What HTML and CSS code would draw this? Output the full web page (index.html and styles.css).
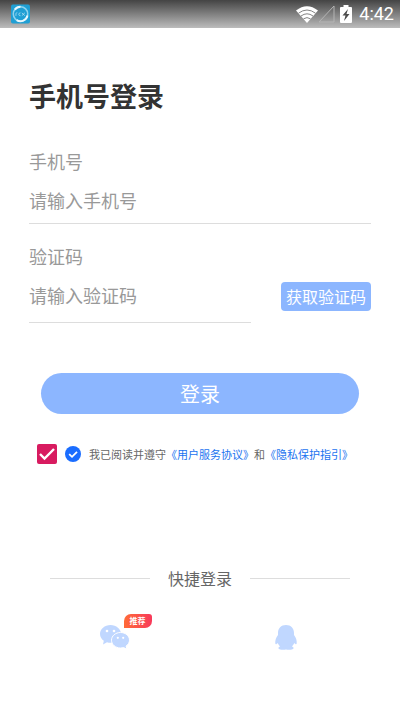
FILE: index.html
```html
<!DOCTYPE html>
<html lang="zh-CN">
<head>
<meta charset="utf-8">
<meta name="viewport" content="width=device-width, initial-scale=1">
<title>手机号登录</title>
<link rel="stylesheet" href="styles.css">
</head>
<body>
<header class="status">
  <svg class="status-app" viewBox="0 0 20 20" aria-hidden="true">
    <rect width="20" height="20" rx="2" fill="#1f9fd4"/>
    <circle cx="10" cy="10" r="7.6" fill="none" stroke="#8fd3ee" stroke-width="1.6"/>
    <path d="M4 5.4A7.6 7.6 0 0 1 10 2.4M17.4 11.6A7.6 7.6 0 0 1 6 16.4" fill="none" stroke="#e8f7fd" stroke-width="2"/>
    <path d="M5.2 12V9.6q.2-1 1.4-1M10 8.8q-1.800 0-1.800 1.500t1.800 1.500M11.400 8.800l3.200 3M14.600 8.800l-3.200 3" fill="none" stroke="#b5e2f4" stroke-width=".8"/>
  </svg>
  <div class="status-icons">
    <svg class="wifi" viewBox="0 0 22 17" aria-hidden="true">
      <path d="M0 4.500Q11-4 22 4.500L11 17z" fill="#fff"/>
      <path d="M2.500 7.200Q11 .8 19.500 7.200M5 10Q11 5.600 17 10M7.500 12.800Q11 10.400 14.500 12.800" fill="none" stroke="#858585" stroke-width="1"/>
    </svg>
    <svg class="signal" viewBox="0 0 17 18" aria-hidden="true">
      <path d="M16 1v16H1z" fill="none" stroke="#b4b4b4" stroke-width="1"/>
    </svg>
    <svg class="battery" viewBox="0 0 12 18" aria-hidden="true">
      <path d="M3.500 0h5v2H11q1 0 1 1v14q0 1-1 1H1q-1 0-1-1V3q0-1 1-1h2.500z" fill="#fff"/>
      <path d="M8 4L2.500 10.500h3L4 16l5.500-7h-3z" fill="#4c4c4c"/>
    </svg>
    <time class="clock">4:42</time>
  </div>
</header>
<main class="page">
  <h1 class="title">手机号登录</h1>
  <form class="form">
    <div class="field">
      <label class="label" for="phone">手机号</label>
      <input class="input" id="phone" type="tel" placeholder="请输入手机号">
    </div>
    <div class="code-row">
      <div class="field code-field">
        <label class="label" for="code">验证码</label>
        <input class="input" id="code" type="text" inputmode="numeric" placeholder="请输入验证码">
      </div>
      <button class="code-button" type="button">获取验证码</button>
    </div>
    <button class="login" type="submit">登录</button>
    <div class="agreement">
      <span class="tick tick-square">
        <input type="checkbox" aria-label="同意协议" checked>
        <svg viewBox="0 0 20 20" aria-hidden="true"><path d="M3 10l4.500 4.500L17 5" fill="none" stroke="#fff" stroke-width="2.400"/></svg>
      </span>
      <span class="tick tick-round">
        <input type="checkbox" id="agree" checked>
        <svg viewBox="0 0 16 16" aria-hidden="true"><path d="M4.200 8.200l2.800 2.600 5-5" fill="none" stroke="#fff" stroke-width="1.800"/></svg>
      </span>
      <div class="agreement-text"><label for="agree">我已阅读并遵守</label><a href="#terms">《用户服务协议》</a>和<a href="#privacy">《隐私保护指引》</a></div>
    </div>
  </form>
  <section class="quick">
    <h2 class="quick-title">快捷登录</h2>
    <div class="quick-options">
      <a class="option" href="#wechat" aria-label="微信">
        <svg class="wechat" viewBox="0 0 30 24" aria-hidden="true">
          <path d="M10.500 0C4.700 0 0 4 0 9c0 2.800 1.500 5.200 3.800 6.800L3 19.500l4-2.200q1.700.5 3.500.5C16.300 17.800 21 14 21 9S16.300 0 10.500 0z" fill="#c0d7ff"/>
          <path d="M20.500 7.500c-5 0-9 3.400-9 7.700s4 7.800 9 7.800q1.600 0 3-.4l3.400 1.400-.8-3c2-1.400 3.400-3.400 3.400-5.800 0-4.300-4-7.700-9-7.700z" fill="#c0d7ff" stroke="#fff" stroke-width="1"/>
          <g fill="#fff"><circle cx="7" cy="6" r="1.300"/><circle cx="14" cy="6" r="1.300"/><circle cx="17.800" cy="12.800" r="1.100"/><circle cx="23.200" cy="12.800" r="1.100"/></g>
        </svg>
        <span class="badge">推荐</span>
      </a>
      <a class="option" href="#qq" aria-label="QQ">
        <svg class="qq" viewBox="0 0 22 25" aria-hidden="true">
          <path d="M11 0C6 0 3 3.500 3 8v2C1 12.500 0 15.500.3 18.500c.3 1.500 1.500.5 2.500-.5.4 1.300 1.200 2.500 2.400 3.300-1.300.5-2 1.200-1.700 2.200.5 1.500 5.500 1.500 7.500 1 2 .5 7 .5 7.500-1 .3-1-.4-1.700-1.700-2.200 1.200-.8 2-2 2.400-3.300 1 1 2.200 2 2.500.5.300-3-.7-6-2.700-8.500V8C19 3.500 16 0 11 0z" fill="#c0d7ff"/>
        </svg>
      </a>
    </div>
  </section>
</main>
</body>
</html>
```
FILE: styles.css
```css
* {
  box-sizing: border-box;
}

body {
  margin: 0;
  background: #fff;
  color: #666;
  font-family: "Noto Sans CJK SC", sans-serif;
}

button,
input {
  margin: 0;
  padding: 0;
  border: 0;
  font: inherit;
}

a {
  color: #1a73f0;
  text-decoration: none;
}

svg {
  display: block;
}

.status {
  display: flex;
  justify-content: space-between;
  align-items: center;
  height: 28px;
  padding: 0 6px 0 11px;
  background: linear-gradient(#444, #bcbcbc);
}

.status-app {
  width: 19px;
  height: 20px;
}

.status-icons {
  display: flex;
  align-items: center;
}

.wifi {
  width: 22px;
  height: 17px;
}

.signal {
  width: 17px;
  height: 18px;
}

.battery {
  width: 12px;
  height: 18px;
  margin: 0 7px 0 5px;
}

.clock {
  color: #fff;
  font: 18px/28px Roboto, sans-serif;
}

.page {
  padding: 48px 29px 0;
}

.title {
  margin: 0 0 31px;
  color: #333;
  font-size: 27px;
  line-height: 40px;
  font-weight: 700;
}

.field {
  display: flex;
  flex-direction: column;
  gap: 11px;
  padding-bottom: 9px;
  border-bottom: 1px solid #ddd;
}

.label,
.input {
  height: 28px;
  color: #999;
  font-size: 18px;
  line-height: 28px;
}

.input {
  width: 100%;
  background: none;
  outline: 0;
}

.input::placeholder {
  color: #999;
  opacity: 1;
}

.code-row {
  display: flex;
  align-items: flex-end;
  gap: 30px;
  margin-top: 18px;
}

.code-field {
  flex: 1;
  min-width: 0;
  padding-bottom: 13px;
}

.code-button {
  width: 90px;
  height: 29px;
  margin-bottom: 12px;
  border-radius: 4px;
  background: #8cb6ff;
  color: #fff;
  font-size: 16px;
  line-height: 29px;
  white-space: nowrap;
}

.login {
  display: block;
  width: calc(100% - 24px);
  height: 41px;
  margin: 50px auto 0;
  border-radius: 21px;
  background: #8cb6ff;
  color: #fff;
  font-size: 20px;
  line-height: 41px;
}

.agreement {
  display: flex;
  align-items: center;
  gap: 8px;
  margin: 30px 0 0 8px;
}

.tick {
  display: grid;
  flex: none;
}

.tick > * {
  grid-area: 1 / 1;
  width: 100%;
  height: 100%;
}

.tick input {
  appearance: none;
  border-radius: inherit;
}

.tick svg {
  pointer-events: none;
}

.tick input:not(:checked) + svg {
  visibility: hidden;
}

.tick-square {
  width: 20px;
  height: 20px;
  border-radius: 2px;
  background: #d81b60;
}

.tick-round {
  width: 16px;
  height: 16px;
  border-radius: 50%;
  background: #1a6dff;
}

.agreement-text {
  font-size: 11px;
  line-height: 16px;
  white-space: nowrap;
}

.quick {
  margin-top: 102px;
}

.quick-title {
  display: flex;
  align-items: center;
  gap: 18px;
  margin: 0 21px;
  font-size: 16px;
  line-height: 24px;
  font-weight: 400;
}

.quick-title::before,
.quick-title::after {
  content: "";
  flex: 1;
  height: 1px;
  background: #ddd;
}

.quick-options {
  display: grid;
  grid-template-columns: 1fr 1fr;
  justify-items: center;
  margin-top: 35px;
}

.option {
  position: relative;
}

.wechat {
  width: 30px;
  height: 24px;
}

.qq {
  width: 22px;
  height: 25px;
}

.badge {
  position: absolute;
  top: -11px;
  left: 24px;
  width: 28px;
  border-radius: 7px 3px 7px 0;
  background: linear-gradient(90deg, #ff6b38, #f8395a);
  color: #fff;
  font-size: 8px;
  font-weight: 700;
  line-height: 14px;
  text-align: center;
}
```
